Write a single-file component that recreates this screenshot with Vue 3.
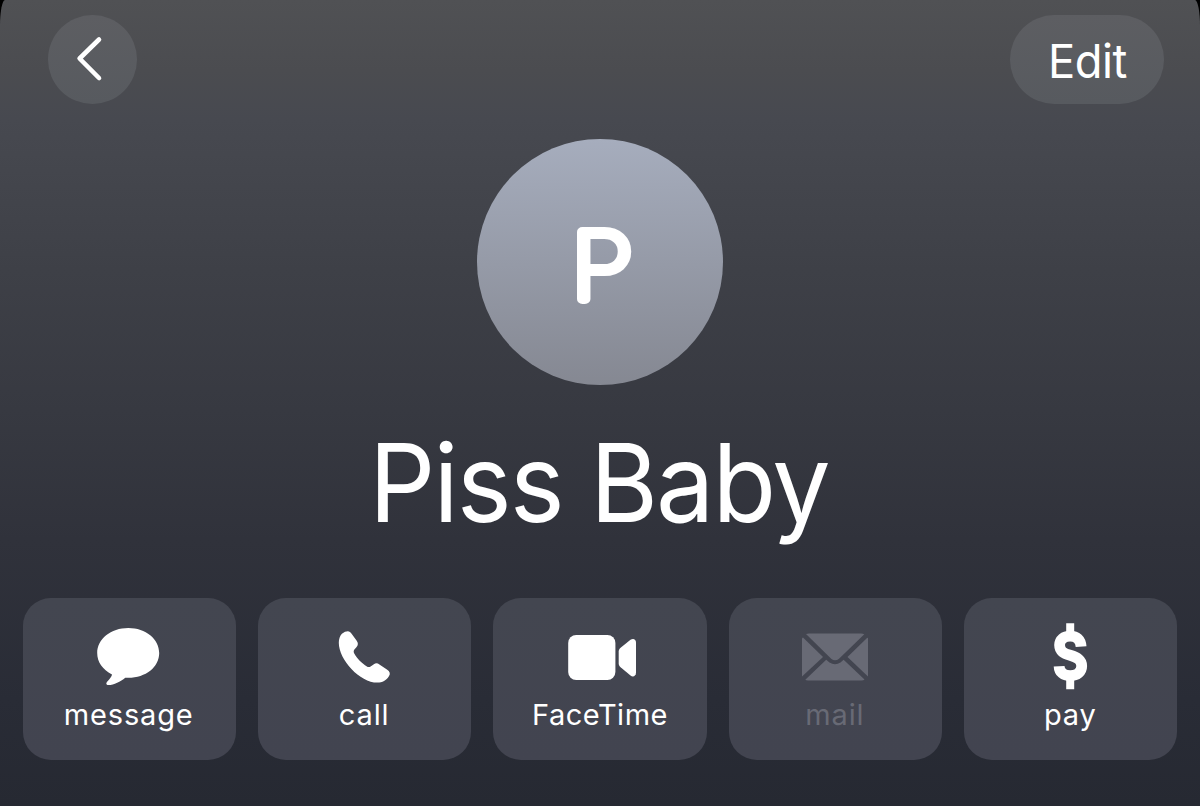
<script setup>
const actions = [
  { id: 'message', label: 'message' },
  { id: 'call', label: 'call' },
  { id: 'facetime', label: 'FaceTime' },
  { id: 'mail', label: 'mail', disabled: true },
  { id: 'pay', label: 'pay' },
]
</script>

<template>
  <main class="screen">
    <header class="bar">
      <button class="back" aria-label="Back">
        <svg width="30" height="46" viewBox="0 0 30 46">
          <path d="M25 3.5L5.6 22.5L25 42" fill="none" stroke="#fff" stroke-width="4.6" stroke-linecap="round" stroke-linejoin="round" />
        </svg>
      </button>
      <button class="edit"><span>Edit</span></button>
    </header>

    <div class="avatar">
      <svg width="246" height="246" viewBox="0 0 246 246">
        <text class="initial" transform="translate(94 159.6) scale(1.11 1)">P</text>
      </svg>
    </div>

    <h1 class="name">Piss Baby</h1>

    <nav class="actions">
      <button v-for="a in actions" :key="a.id" class="card" :class="[a.id, { disabled: a.disabled }]">
        <svg v-if="a.id === 'message'" class="icon" width="80" height="70" viewBox="0 0 80 70">
          <path fill="#fff" d="M39.300 7C56.800 7 70.200 18 70.200 32C70.200 46 56.800 56.800 39.300 56.800C38.300 56.800 37.300 56.700 36.300 56.700C31.500 60.500 25 64 19.500 64C17 64 16.800 62.300 18.300 60.500C20.500 58 23 55.500 23 53.500C13.500 48.500 8.200 41 8.200 32C8.200 18 21.800 7 39.300 7Z" />
        </svg>
        <svg v-else-if="a.id === 'call'" class="icon" width="80" height="70" viewBox="1.600 -0.200 80 70">
          <path fill="#fff" d="M18.500 12.500C20.500 10.800 22.800 10 24.400 10C26 10 27.200 11 28.200 12.500L33.300 19.500C35 22 34.800 23.800 33 26L30.800 28.600C30 30 30.200 31.200 31 32.600C33.500 37 38.500 42.300 43.500 45.300C44.700 46 46 46 47.200 45.200L50.500 43C52.300 41.800 54 41.800 56 43.200L63.500 48.200C66.600 50.300 67.200 52.300 65.500 55C63 59.200 59 61.400 54 61.400C36.500 61.400 15.400 38.500 15.400 21.500C15.400 18 16.500 14.500 18.500 12.500Z" />
        </svg>
        <svg v-else-if="a.id === 'facetime'" class="icon" width="80" height="70" viewBox="0 0 80 70">
          <rect x="8.200" y="14" width="47.200" height="45" rx="8" fill="#fff" />
          <path fill="#fff" d="M58.700 30.500C58.700 28.800 59.400 27.700 60.600 26.700L70.500 18.800C73 17 76 18 76 21.500V51.500C76 55 73 56.500 70.500 54.500L60.600 46.300C59.400 45.200 58.700 44 58.700 42.500Z" />
        </svg>
        <svg v-else-if="a.id === 'mail'" class="icon" width="80" height="70" viewBox="0 -0.500 80 70">
          <g fill="#686a75">
            <path d="M11 12.600Q12.500 12 14 12H66Q68 12 69.300 12.800L44 37.200Q40 40.500 36.200 37.200Z" />
            <path d="M7 17.500Q7 16 8 16L28 35.500L7 55Z" />
            <path d="M73 17.500Q73 16 72 16.400L52.500 35.500L73 55Z" />
            <path d="M31.200 38.300L34.500 41Q40 44.500 45.500 41L48.600 38.300L69.500 58Q68.500 59 66.500 59H13Q11 59 10.300 58.200Z" />
          </g>
        </svg>
        <svg v-else class="icon" width="80" height="70" viewBox="0.800 0.800 80 70">
          <g fill="none" stroke="#fff">
            <path stroke-width="8" d="M40 3V16M40 55V69" />
            <path stroke-width="10.800" d="M50.900 26.400C50.500 19.500 46.300 15.900 40 15.900C33.600 15.900 29.400 19.400 29.400 24.900C29.400 31 33.500 33.200 40 35.100C46.900 37.200 51.500 39.600 51.500 45.900C51.500 51.900 46.800 55.500 40 55.500C33.300 55.500 29.100 52.100 28.900 46" />
          </g>
        </svg>
        <span class="label">{{ a.label }}</span>
      </button>
    </nav>
  </main>
</template>

<style>
body {
  margin: 0;
  background: #000;
}
</style>

<style scoped>
.screen {
  box-sizing: border-box;
  width: 1200px;
  height: 806px;
  overflow: hidden;
  display: flex;
  flex-direction: column;
  align-items: center;
  border-radius: 5px 5px 0 0 / 26px 26px 0 0;
  background: linear-gradient(180deg, #505154 0, #4b4c50 70px, #474950 120px, #3e4047 270px, #373941 410px, #30323b 540px, #292c36 700px, #262932 806px);
  color: #fff;
  font-family: Inter, "Liberation Sans", sans-serif;
}
button {
  border: 0;
  padding: 0;
  color: inherit;
  font: inherit;
}
.bar {
  box-sizing: border-box;
  width: 100%;
  padding: 15px 36px 0 47.500px;
  display: flex;
  justify-content: space-between;
}
.back,
.edit {
  height: 89px;
  display: flex;
  align-items: center;
  justify-content: center;
  background: linear-gradient(#5d5e62, #575a5f);
}
.back {
  width: 89px;
  border-radius: 50%;
}
.back svg {
  margin: 0 6px 2px 0;
}
.edit {
  width: 154px;
  border-radius: 45px;
  font-size: 46.500px;
  letter-spacing: -0.500px;
}
.edit span {
  margin: 3px 0 0 1px;
  transform: scaleX(0.975);
}
.avatar {
  width: 246px;
  height: 246px;
  margin-top: 35px;
  border-radius: 50%;
  background: linear-gradient(#a6adbd, #858892);
}
.avatar svg {
  display: block;
}
.initial {
  font-size: 92px;
  font-weight: 100;
  fill: #fff;
  stroke: #fff;
  stroke-width: 10px;
  stroke-linejoin: round;
}
.name {
  margin: 33px 0 0;
  height: 131px;
  line-height: 130px;
  font-size: 108.500px;
  font-weight: 410;
  letter-spacing: -2px;
  white-space: nowrap;
  transform: translateX(-1px) scaleX(0.958);
}
.actions {
  box-sizing: border-box;
  width: 100%;
  margin-top: 49px;
  padding: 0 22.500px;
  display: grid;
  grid-template-columns: repeat(5, 1fr);
  gap: 22px;
}
.card {
  height: 162px;
  border-radius: 28px;
  display: flex;
  flex-direction: column;
  align-items: center;
  background: linear-gradient(#434650, #424450);
}
.icon {
  margin-top: 23px;
}
.label {
  height: 36px;
  margin: 6px 1px 0 0;
  line-height: 36px;
  font-size: 29px;
  font-weight: 370;
  letter-spacing: 0.850px;
}
.facetime .label {
  margin-right: 0;
  letter-spacing: 0.500px;
}
.disabled .label {
  color: #686a75;
}
</style>
